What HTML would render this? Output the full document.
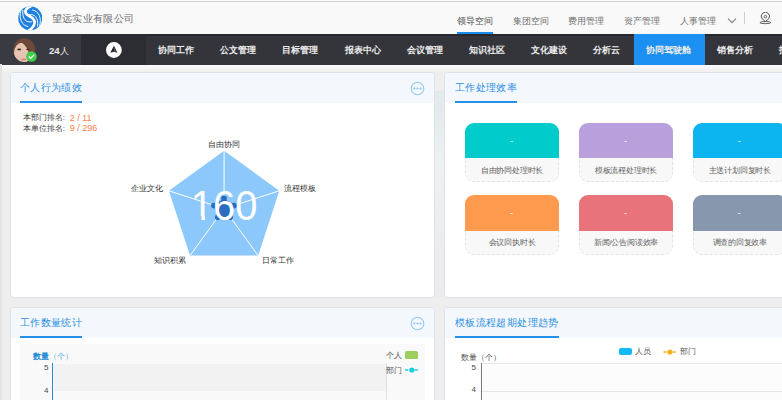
<!DOCTYPE html>
<html><head><meta charset="utf-8">
<style>
*{margin:0;padding:0;box-sizing:border-box}
html,body{width:782px;height:400px;overflow:hidden}
body{position:relative;background:#eeeeee;font-family:"Liberation Sans",sans-serif;color:#333}
.a{position:absolute;white-space:nowrap}
#hdr{left:0;top:0;width:782px;height:34px;background:#f9f9f9}
#hdr .line{left:0;top:1px;width:782px;height:1px;background:#d2d2d2}
.comp{font-size:10.4px;letter-spacing:0.36px;color:#6a6a6a;line-height:12px}
.tab{font-size:9.4px;letter-spacing:0.15px;color:#707070;line-height:12px;top:15px}
#nav{left:0;top:34px;width:782px;height:30.5px;background:#34353b}
.mi{font-size:9.4px;color:#ececec;line-height:30px;top:0.5px;font-weight:700}
.panel{background:#fff;border:1px solid #dde3e8;border-radius:4px;overflow:hidden}
.ph{left:0;top:0;width:100%;height:30px;background:#f4f8fd}
.pt{font-size:10.4px;letter-spacing:0.38px;color:#2b8fe4;line-height:12px;top:8.7px;left:9.4px}
.ul{height:2px;background:#2490e8;top:28px;left:9.5px}
.rk{font-size:7.9px;line-height:10px;color:#3a3a3a;margin-top:0.4px}
.rn{font-size:9px;line-height:10px;color:#f8804c}
.lab{font-size:7.6px;line-height:10px;color:#333}
.card{width:94px;height:59.6px;border:1px dashed #e4e4e4;border-radius:9px;background:#f8f8f8}
.card .top{position:absolute;left:-1px;top:-1px;width:94px;height:35.5px;border-radius:9px 9px 0 0}
.card .dash{position:absolute;left:-0.6px;width:92px;top:12px;text-align:center;color:#fff;font-size:9px;line-height:10px}
.card .lbl{position:absolute;left:0;width:92px;top:42.2px;text-align:center;color:#606060;font-size:7.9px;letter-spacing:-0.22px;line-height:10px}
</style></head><body>

<!-- header -->
<div id="hdr" class="a">
  <div class="a line"></div>
  <svg class="a" style="left:17.6px;top:6.1px" width="24.5" height="24.5" viewBox="0 0 100 100"><defs><clipPath id="LC"><circle cx="50" cy="50" r="49"/></clipPath></defs>
<circle cx="50" cy="50" r="49" fill="#1f80e0"/>
<g clip-path="url(#LC)" fill="none" stroke="#fff">
<path d="M 58 -2 C 36 6, 24 20, 34 32 C 42 42, 60 44, 66 58 C 72 72, 62 90, 42 102" stroke-width="11"/>
<path d="M 42 36 C 68 30, 84 48, 80 84" stroke-width="3.8"/>
<path d="M 58 16 C 84 20, 98 48, 88 82" stroke-width="3.8"/>
<path d="M 58 64 C 32 70, 16 52, 20 16" stroke-width="3.8"/>
<path d="M 42 84 C 16 80, 2 52, 12 18" stroke-width="3.8"/>
</g>
</svg>
  <div class="a comp" style="left:51.5px;top:12.6px">望远实业有限公司</div>
  <div class="a tab" style="left:456.7px;color:#505050">领导空间</div>
  <div class="a" style="left:457px;top:32px;width:36px;height:2px;background:#1a8cf0"></div>
  <div class="a tab" style="left:512.7px">集团空间</div>
  <div class="a tab" style="left:567.6px">费用管理</div>
  <div class="a tab" style="left:624px">资产管理</div>
  <div class="a tab" style="left:679.6px">人事管理</div>
  <svg class="a" style="left:727px;top:17px" width="10" height="8" viewBox="0 0 10 8"><path d="M1 1.6 L5 5.6 L9 1.6" stroke="#808080" stroke-width="1.1" fill="none"/></svg>
  <div class="a" style="left:744px;top:12px;width:1px;height:12px;background:#cfcfcf"></div>
  <svg class="a" style="left:759px;top:12px" width="13" height="13" viewBox="0 0 13 13">
    <path d="M6.4 9.5 L3.2 6.9 A4.1 4.1 0 1 1 9.6 6.9 Z" stroke="#555" stroke-width="1" fill="none" stroke-linejoin="round"/>
    <circle cx="6.4" cy="4.7" r="1.3" stroke="#555" stroke-width="0.9" fill="none"/>
    <ellipse cx="6.4" cy="10.6" rx="5.5" ry="1.05" stroke="#555" stroke-width="0.9" fill="none"/>
  </svg>
</div>

<!-- nav -->
<div id="nav" class="a">
  <div class="a" style="left:0;top:0;width:782px;height:1.5px;background:#28292e"></div>
  <div class="a" style="left:0;top:0;width:81px;height:30.5px;background:#3a3b42"></div>
  <div class="a" style="left:81px;top:0;width:64.5px;height:30.5px;background:#2c2d33"></div>
  <svg class="a" style="left:13px;top:3.5px" width="23" height="24" viewBox="0 0 23 24">
    <defs><clipPath id="AV"><ellipse cx="11.3" cy="12" rx="11" ry="12"/></clipPath></defs>
    <g clip-path="url(#AV)">
      <rect x="0" y="0" width="23" height="24" fill="#6a4636"/>
      <ellipse cx="9.5" cy="15" rx="8.5" ry="10.5" fill="#e6c4b2"/>
      <path d="M3 4 C7 0 16 -1 20 6 C22 11 22 18 21 24 L16 24 C17 16 15 9 9 5 C7 4 5 5 3 7 Z" fill="#6e4838"/>
      <ellipse cx="6.2" cy="11.4" rx="2" ry="0.9" fill="#3a2a28"/>
      <ellipse cx="14.8" cy="11.4" rx="1.6" ry="0.8" fill="#4a3430"/>
      <ellipse cx="10.5" cy="21.5" rx="3" ry="1" fill="#d98a80"/>
    </g>
  </svg>
  <svg class="a" style="left:25.5px;top:16.5px" width="11" height="11" viewBox="0 0 11 11"><circle cx="5.5" cy="5.5" r="5.3" fill="#3cd04c"/><path d="M2.8 5.6 L4.7 7.3 L8.2 3.9" stroke="#fff" stroke-width="1.3" fill="none"/></svg>
  <div class="a mi" style="left:49px;top:1.6px;font-size:9.6px"><b>24</b><span style="font-size:8.8px;font-weight:500">人</span></div>
  <svg class="a" style="left:105.5px;top:8px" width="16" height="16" viewBox="0 0 16 16"><circle cx="7.9" cy="8" r="7.9" fill="#fff"/><path d="M7.9 3.8 L11.5 10.8 L7.9 9.8 L4.3 10.8 Z" fill="#222328"/><path d="M7.9 5 L7.9 9.6 L10.2 10.2 Z" fill="#55565c"/></svg>
  <div class="a mi" style="left:158px">协同工作</div>
  <div class="a mi" style="left:220px">公文管理</div>
  <div class="a mi" style="left:282px">目标管理</div>
  <div class="a mi" style="left:344.5px">报表中心</div>
  <div class="a mi" style="left:406.5px">会议管理</div>
  <div class="a mi" style="left:468.5px">知识社区</div>
  <div class="a mi" style="left:530.5px">文化建设</div>
  <div class="a mi" style="left:592.5px">分析云</div>
  <div class="a" style="left:634px;top:0;width:71px;height:30.5px;background:#1b8ff2"></div>
  <div class="a mi" style="left:646px">协同驾驶舱</div>
  <div class="a mi" style="left:717px">销售分析</div>
  <div class="a mi" style="left:779px;font-weight:bold">报表</div>
</div>

<div class="a" style="left:0;top:64.5px;width:782px;height:7px;background:linear-gradient(to bottom,#fbfbfb 0,#f6f6f6 40%,#efefef 100%)"></div>
<div class="a" style="left:0;top:64px;width:2px;height:336px;background:#e4e4e4"></div>

<div class="a" style="left:434px;top:91px;width:10px;height:206px;background:linear-gradient(to bottom,#e2e9eb 0,#e9eef0 25%,#eef1f2 35%,#ececec 75%)"></div>

<!-- left top panel -->
<div class="a panel" style="left:9.5px;top:72px;width:425px;height:225.5px">
  <div class="a ph"></div>
  <div class="a pt">个人行为绩效</div>
  <div class="a ul" style="width:62px"></div>
  <svg class="a" style="left:399.9px;top:7.6px" width="15" height="15" viewBox="0 0 15 15"><circle cx="7.5" cy="7.5" r="6.3" stroke="#92c9f4" stroke-width="1.1" fill="none"/><circle cx="4.4" cy="7.5" r="1.05" fill="#86c1f1"/><circle cx="7.5" cy="7.5" r="1.05" fill="#86c1f1"/><circle cx="10.6" cy="7.5" r="1.05" fill="#86c1f1"/></svg>
  <div class="a rk" style="left:12.6px;top:40px">本部门排名</div>
  <div class="a rk" style="left:52.3px;top:40px">:</div>
  <div class="a rn" style="left:59.2px;top:39.8px">2 / 11</div>
  <div class="a rk" style="left:12.6px;top:50.2px">本单位排名</div>
  <div class="a rk" style="left:52.3px;top:50.2px">:</div>
  <div class="a rn" style="left:59.2px;top:50px">9 / 296</div>
  <svg class="a" style="left:-1px;top:-1px" width="425" height="225" viewBox="9.5 72 425 225">
    <polygon points="223.6,150.7 278.8,190.8 257.7,255.6 189.5,255.6 168.4,190.8" fill="#8cc8fb"/>
    <g stroke="#fff" stroke-width="1">
      <line x1="223.6" y1="208.7" x2="223.6" y2="150.7"/>
      <line x1="223.6" y1="208.7" x2="278.8" y2="190.8"/>
      <line x1="223.6" y1="208.7" x2="257.7" y2="255.6"/>
      <line x1="223.6" y1="208.7" x2="189.5" y2="255.6"/>
      <line x1="223.6" y1="208.7" x2="168.4" y2="190.8"/>
    </g>
    <polygon points="223.5,198.2 233.6,205.6 229.7,217.3 217.3,217.3 213.4,205.6" fill="#2a6cc0"/>
    <g fill="#2a6cc0"><circle cx="223.5" cy="198.2" r="2.8"/><circle cx="233.6" cy="205.6" r="2.8"/><circle cx="229.7" cy="217.3" r="2.8"/><circle cx="217.3" cy="217.3" r="2.8"/><circle cx="213.4" cy="205.6" r="2.8"/></g>
    <text transform="translate(223.6,220) scale(0.95,1)" x="0" y="0" text-anchor="middle" font-family="Liberation Sans" font-size="42" fill="#fff">160</text>
    <rect x="192" y="216" width="9" height="4.2" fill="#8cc8fb"/><rect x="204.5" y="216" width="8.5" height="4.2" fill="#8cc8fb"/>
  </svg>
  <div class="a lab" style="left:197.5px;top:67px">自由协同</div>
  <div class="a lab" style="left:120px;top:111px">企业文化</div>
  <div class="a lab" style="left:273.5px;top:111px">流程模板</div>
  <div class="a lab" style="left:143.5px;top:183px">知识积累</div>
  <div class="a lab" style="left:251px;top:183px">日常工作</div>
</div>

<!-- right top panel -->
<div class="a panel" style="left:443.8px;top:72px;width:400px;height:225.5px">
  <div class="a ph"></div>
  <div class="a pt" style="left:10.1px">工作处理效率</div>
  <div class="a ul" style="width:62px;left:10.2px"></div>
  <div class="a card" style="left:20.2px;top:49.6px"><div class="top" style="background:#02cbcb"></div><div class="dash">-</div><div class="lbl">自由协同处理时长</div></div>
  <div class="a card" style="left:134.2px;top:49.6px"><div class="top" style="background:#b9a0dd"></div><div class="dash">-</div><div class="lbl">模板流程处理时长</div></div>
  <div class="a card" style="left:248px;top:49.6px"><div class="top" style="background:#0db5f0"></div><div class="dash">-</div><div class="lbl">主送计划回复时长</div></div>
  <div class="a card" style="left:20.2px;top:122.3px"><div class="top" style="background:#fd9a4d"></div><div class="dash">-</div><div class="lbl">会议回执时长</div></div>
  <div class="a card" style="left:134.2px;top:122.3px"><div class="top" style="background:#e9737a"></div><div class="dash">-</div><div class="lbl">新闻/公告阅读效率</div></div>
  <div class="a card" style="left:248px;top:122.3px"><div class="top" style="background:#8797ae"></div><div class="dash">-</div><div class="lbl">调查的回复效率</div></div>
</div>

<!-- left bottom panel -->
<div class="a panel" style="left:9.5px;top:307px;width:425px;height:120px">
  <div class="a ph"></div>
  <div class="a pt">工作数量统计</div>
  <div class="a ul" style="width:62px"></div>
  <svg class="a" style="left:399.9px;top:7.6px" width="15" height="15" viewBox="0 0 15 15"><circle cx="7.5" cy="7.5" r="6.3" stroke="#92c9f4" stroke-width="1.1" fill="none"/><circle cx="4.4" cy="7.5" r="1.05" fill="#86c1f1"/><circle cx="7.5" cy="7.5" r="1.05" fill="#86c1f1"/><circle cx="10.6" cy="7.5" r="1.05" fill="#86c1f1"/></svg>
  <div class="a" style="left:9.5px;top:36px;width:405.2px;height:100px;background:#f9f9f9"></div>
  <div class="a" style="left:43px;top:55.5px;width:332.5px;height:27.5px;background:#f2f2f2"></div>
  <div class="a" style="left:41.2px;top:55px;width:1.4px;height:60px;background:#1f8ad8"></div>
  <div class="a" style="left:22.5px;top:43.8px;font-size:7.9px;line-height:10px;color:#5aaee6;letter-spacing:-0.1px"><b style="color:#1b8bd6">数量</b>（个）</div>
  <div class="a" style="left:33.5px;top:55px;font-size:8px;line-height:10px;color:#4a4a4a">5</div>
  <div class="a" style="left:33.5px;top:77.5px;font-size:8px;line-height:10px;color:#4a4a4a">4</div>
  <div class="a" style="left:375.5px;top:55px;width:1px;height:80px;background:#e0e0e0"></div>
  <div class="a" style="left:375.5px;top:42.5px;font-size:7.9px;line-height:10px;color:#555">个人</div>
  <div class="a" style="left:394.5px;top:43.2px;width:13px;height:7.5px;background:#9dcf5e;border-radius:1.5px"></div>
  <div class="a" style="left:375.5px;top:57.5px;font-size:7.9px;line-height:10px;color:#555">部门</div>
  <svg class="a" style="left:394.5px;top:58.4px" width="14" height="8" viewBox="0 0 14 8"><line x1="0" y1="4" x2="14" y2="4" stroke="#19cde0" stroke-width="1.4" stroke-dasharray="3.2 1.6"/><circle cx="6.8" cy="4" r="2.6" fill="#19cde0"/></svg>
</div>

<!-- right bottom panel -->
<div class="a panel" style="left:443.8px;top:307px;width:400px;height:120px">
  <div class="a ph"></div>
  <div class="a pt" style="left:10.1px">模板流程超期处理趋势</div>
  <div class="a ul" style="width:104px;left:10.2px"></div>
  <div class="a" style="left:173.8px;top:39.8px;width:13px;height:7.6px;background:#13b9f4;border-radius:2px"></div>
  <div class="a" style="left:189.8px;top:38.5px;font-size:7.9px;line-height:10px;color:#555">人员</div>
  <svg class="a" style="left:218px;top:39.5px" width="14" height="8" viewBox="0 0 14 8"><line x1="0.5" y1="4" x2="13.5" y2="4" stroke="#f7b016" stroke-width="1.4" stroke-dasharray="3 1.5"/><circle cx="6.9" cy="4" r="2.6" fill="#f7b016"/></svg>
  <div class="a" style="left:235px;top:38.5px;font-size:7.9px;line-height:10px;color:#555">部门</div>
  <div class="a" style="left:35px;top:55px;width:400px;height:80px;background:#fcfcfc"></div>
  <div class="a" style="left:35px;top:55px;width:400px;height:1.2px;background:#e6e6e6"></div>
  <div class="a" style="left:35px;top:82.5px;width:400px;height:1.2px;background:#e6e6e6"></div>
  <div class="a" style="left:35.8px;top:55px;width:1.4px;height:80px;background:#7a7a7a"></div>
  <div class="a" style="left:16.5px;top:44.5px;font-size:7.9px;line-height:10px;color:#555">数量（个）</div>
  <div class="a" style="left:26.8px;top:54.5px;font-size:8px;line-height:10px;color:#4a4a4a">5</div>
  <div class="a" style="left:26.8px;top:77px;font-size:8px;line-height:10px;color:#4a4a4a">4</div>
</div>

</body></html>
